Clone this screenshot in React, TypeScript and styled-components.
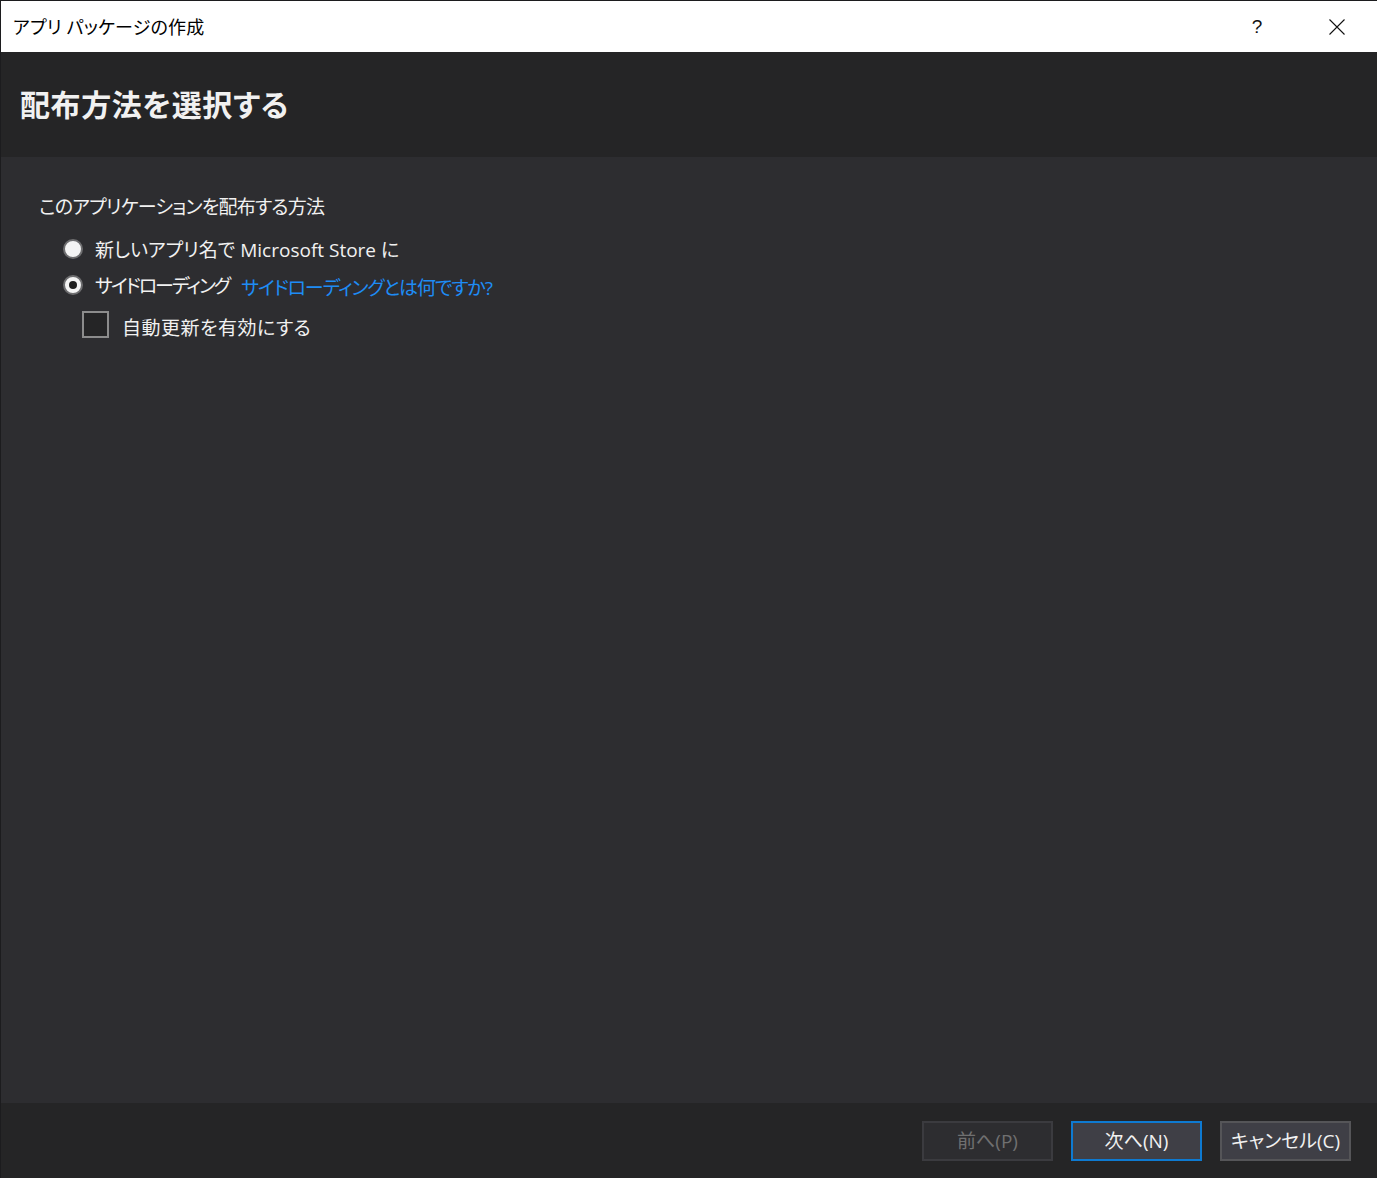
import React from "react";
import styled, { createGlobalStyle } from "styled-components";

const Global = createGlobalStyle`
  html, body { margin: 0; padding: 0; background: #2d2d30; }
  body {
    font-family: "Open Sans", "Noto Sans CJK JP", sans-serif;
    font-feature-settings: "palt";
    -webkit-font-smoothing: antialiased;
  }
  * { box-sizing: border-box; }
`;

const Window = styled.div`
  width: 1377px;
  height: 1178px;
  display: flex;
  flex-direction: column;
  border-left: 1px solid #1c1c1e;
  border-top: 1px solid #1c1c1e;
  background: #2d2d30;
  overflow: hidden;
`;

const TitleBar = styled.div`
  height: 51px;
  flex: none;
  background: #ffffff;
  display: flex;
  align-items: center;
  padding-left: 12px;
  color: #000;
  font-size: 18px;
`;

const TitleText = styled.div`
  flex: 1;
  letter-spacing: 0.2px;
  padding-bottom: 1px;
`;

const TitleButton = styled.div`
  width: 80px;
  height: 51px;
  display: flex;
  align-items: center;
  justify-content: center;
  color: #111;
  font-size: 19px;
  font-family: "Liberation Sans", "Noto Sans CJK JP", sans-serif;
`;

const Header = styled.div`
  height: 105px;
  flex: none;
  background: #252526;
  display: flex;
  align-items: center;
  padding: 0 0 4px 19px;
`;

const HeaderTitle = styled.h1`
  margin: 0;
  font-size: 30px;
  font-weight: 600;
  color: #f1f1f1;
  letter-spacing: 0.6px;
`;

const Content = styled.div`
  flex: 1;
  background: #2d2d30;
  padding: 36px 0 0 38px;
  color: #f1f1f1;
  font-size: 19px;
  display: flex;
  flex-direction: column;
`;

const Label = styled.div`
  height: 28px;
  line-height: 28px;
  letter-spacing: -0.75px;
`;

const OptionList = styled.div`
  display: flex;
  flex-direction: column;
  padding-left: 24px;
  margin-top: 14px;
  gap: 8px;
`;

const OptionRow = styled.div`
  display: flex;
  align-items: center;
  height: 28px;
  gap: 12px;
`;

const OptionText = styled.span<{ $tight?: boolean }>`
  letter-spacing: ${(p) => (p.$tight ? "-2px" : "0")};
`;

const Radio = styled.span<{ $checked?: boolean }>`
  width: 20px;
  height: 20px;
  border-radius: 50%;
  background: #f4f4f4;
  border: 2px solid #6e6e70;
  display: flex;
  align-items: center;
  justify-content: center;
  flex: none;
  &::after {
    content: "";
    display: ${(p) => (p.$checked ? "block" : "none")};
    width: 8px;
    height: 8px;
    border-radius: 50%;
    background: #1e1e1e;
  }
`;

const Link = styled.span`
  color: #1e8cf5;
  margin-top: 4px;
  letter-spacing: -1.1px;
`;

const CheckRow = styled.div`
  display: flex;
  align-items: center;
  height: 28px;
  gap: 13px;
  padding-left: 43px;
  margin-top: 11px;
`;

const CheckBox = styled.span`
  width: 27px;
  height: 27px;
  flex: none;
  border: 2px solid #8c8c8c;
  background: #252526;
`;

const CheckLabel = styled.span`
  margin-top: 5px;
  letter-spacing: 0.5px;
`;

const Footer = styled.div`
  height: 75px;
  flex: none;
  background: #252526;
  display: flex;
  align-items: center;
  justify-content: flex-end;
  gap: 18px;
  padding: 0 26px 0 0;
`;

const Button = styled.button<{ $variant: "disabled" | "primary" | "normal" }>`
  width: 131px;
  height: 40px;
  font-family: inherit;
  font-size: 19px;
  font-feature-settings: "palt";
  padding: 0 0 2px;
  border: 2px solid
    ${(p) =>
      p.$variant === "primary" ? "#0e7ad1" : p.$variant === "disabled" ? "#3b3b3f" : "#555558"};
  background: ${(p) => (p.$variant === "disabled" ? "#2d2d30" : "#3f3f46")};
  color: ${(p) => (p.$variant === "disabled" ? "#707070" : "#f1f1f1")};
  cursor: default;
`;

const CloseIcon = () => (
  <svg width="16" height="16" viewBox="0 0 16 16">
    <path d="M0.5 0.5 L15.5 15.5 M15.5 0.5 L0.5 15.5" stroke="#111" strokeWidth="1.1" fill="none" />
  </svg>
);

export default function App() {
  return (
    <>
      <Global />
      <Window>
        <TitleBar>
          <TitleText>アプリ パッケージの作成</TitleText>
          <TitleButton>?</TitleButton>
          <TitleButton>
            <CloseIcon />
          </TitleButton>
        </TitleBar>
        <Header>
          <HeaderTitle>配布方法を選択する</HeaderTitle>
        </Header>
        <Content>
          <Label>このアプリケーションを配布する方法</Label>
          <OptionList>
            <OptionRow>
              <Radio />
              <OptionText>新しいアプリ名で Microsoft Store に</OptionText>
            </OptionRow>
            <OptionRow>
              <Radio $checked />
              <OptionText $tight>サイドローディング</OptionText>
              <Link>サイドローディングとは何ですか?</Link>
            </OptionRow>
          </OptionList>
          <CheckRow>
            <CheckBox />
            <CheckLabel>自動更新を有効にする</CheckLabel>
          </CheckRow>
        </Content>
        <Footer>
          <Button $variant="disabled">前へ(P)</Button>
          <Button $variant="primary">次へ(N)</Button>
          <Button $variant="normal">キャンセル(C)</Button>
        </Footer>
      </Window>
    </>
  );
}
